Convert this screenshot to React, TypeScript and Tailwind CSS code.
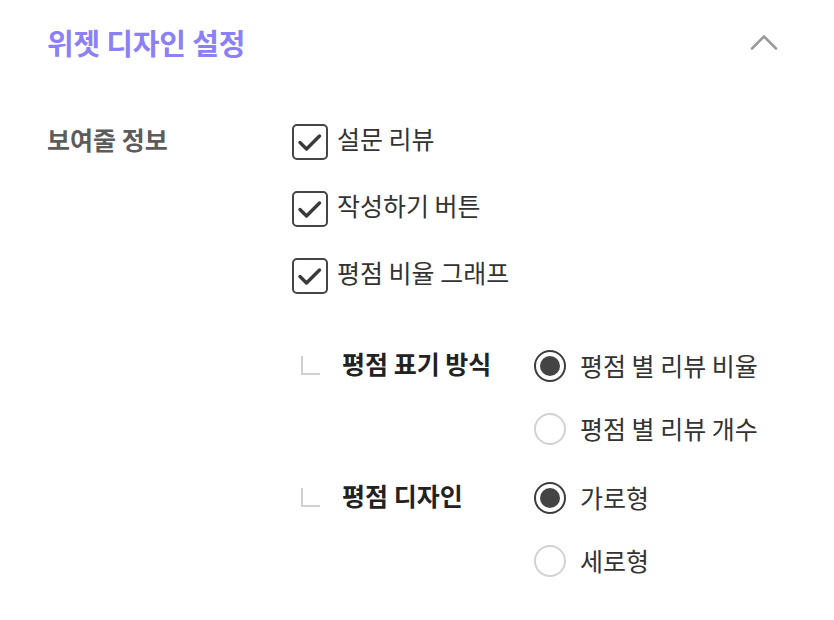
const font = { fontFamily: '"Noto Sans CJK KR", "Noto Sans", sans-serif' };

const checks = ["설문 리뷰", "작성하기 버튼", "평점 비율 그래프"];

const groups = [
  { label: "평점 표기 방식", options: ["평점 별 리뷰 비율", "평점 별 리뷰 개수"] },
  { label: "평점 디자인", options: ["가로형", "세로형"] },
];

function CheckBox() {
  return (
    <span className="flex h-[36px] w-[36px] shrink-0 items-center justify-center rounded-[5px] border-2 border-[#454545] bg-white">
      <svg width="32" height="32" viewBox="0 0 32 32" fill="none">
        <path d="M6 16.5l6.5 6.5L25.5 10" stroke="#3a3a3a" strokeWidth="3.4" strokeLinecap="round" strokeLinejoin="round" />
      </svg>
    </span>
  );
}

function Radio({ checked }: { checked: boolean }) {
  return checked ? (
    <span className="flex h-[32px] w-[32px] shrink-0 items-center justify-center rounded-full border-[2.5px] border-[#3c3c3c] bg-white">
      <span className="h-[20px] w-[20px] rounded-full bg-[#444444]" />
    </span>
  ) : (
    <span className="h-[32px] w-[32px] shrink-0 rounded-full border-2 border-[#d2d2d2] bg-white" />
  );
}

export default function App() {
  return (
    <div className="min-h-[620px] w-[834px] bg-white px-[47px] pt-[22px]" style={font}>
      <div className="flex h-[40px] items-center justify-between">
        <h2 className="text-[29px] leading-none font-bold tracking-[-0.2px] text-[#8b80f8]">위젯 디자인 설정</h2>
        <svg className="mr-[9px]" width="28" height="16" viewBox="0 0 28 16" fill="none">
          <path d="M2 14.5L14 2.5l12 12" stroke="#9b9b9b" strokeWidth="2.6" strokeLinecap="round" strokeLinejoin="round" />
        </svg>
      </div>

      <div className="mt-[62px] flex">
        <div className="-mt-[1px] w-[245px] shrink-0 text-[25px] leading-[32px] font-bold text-[#5c5c5c]">보여줄 정보</div>

        <div className="flex flex-col">
          <div className="flex flex-col gap-[31px]">
            {checks.map((c) => (
              <label key={c} className="flex h-[36px] items-center gap-[9px]">
                <CheckBox />
                <span className="-mt-[8px] text-[25px] leading-none text-[#333333]">{c}</span>
              </label>
            ))}
          </div>

          <div className="mt-[56px] flex flex-col gap-[37px]">
            {groups.map((g) => (
              <div key={g.label} className="flex">
                <div className="flex w-[242px] shrink-0 items-start">
                  <span className="mt-[6px] ml-[9px] h-[19px] w-[19px] border-b-2 border-l-2 border-[#d0d0d0]" />
                  <span className="-mt-[3px] ml-[22px] text-[25px] leading-[32px] font-bold text-[#222222]">{g.label}</span>
                </div>
                <div className="flex flex-col gap-[31px]">
                  {g.options.map((o, i) => (
                    <label key={o} className="flex h-[32px] items-center gap-[14px]">
                      <Radio checked={i === 0} />
                      <span className="-mt-[2px] text-[25px] leading-none text-[#333333]">{o}</span>
                    </label>
                  ))}
                </div>
              </div>
            ))}
          </div>
        </div>
      </div>
    </div>
  );
}
